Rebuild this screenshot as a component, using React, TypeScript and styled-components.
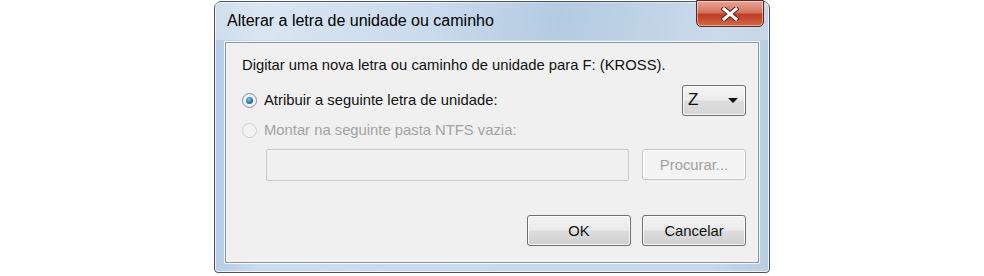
import styled, { createGlobalStyle } from 'styled-components';

const GlobalStyle = createGlobalStyle`
    body {
        margin: 0;
        background: #ffffff;
        font-family: "Liberation Sans", Arial, sans-serif;
    }
`

const Page = styled.div`
    width: 984px;
    height: 276px;
    padding-left: 214px;
    padding-top: 1px;
    box-sizing: border-box;
    overflow: hidden;
`

const Window = styled.div`
    position: relative;
    width: 556px;
    height: 272px;
    box-sizing: border-box;
    border: 1px solid #4a5260;
    border-radius: 7px 7px 4px 4px;
    background: linear-gradient(90deg, #b7cce2 0%, #cbdcee 8%, #c6d8ea 90%, #b9cde2 100%);
    box-shadow: inset 0 0 0 1px rgba(255,255,255,0.7);
    display: flex;
    flex-direction: column;
`

const TitleBar = styled.div`
    height: 38px;
    display: flex;
    align-items: center;
    padding-left: 12px;
    padding-bottom: 1px;
    box-sizing: border-box;
    font-size: 16px;
    color: #000;
    background: linear-gradient(100deg, rgba(255,255,255,0.35) 0%, rgba(255,255,255,0) 40%, rgba(160,188,216,0.5) 62%, rgba(255,255,255,0.2) 100%);
`

const CloseButton = styled.div`
    position: absolute;
    top: -2px;
    right: 5px;
    width: 68px;
    height: 27px;
    box-sizing: border-box;
    border: 1px solid #5a2a22;
    border-radius: 0 0 5px 5px;
    background: linear-gradient(180deg, #e8a595 0%, #d47560 45%, #c03c22 55%, #d56a48 100%);
    box-shadow: inset 0 0 0 1px rgba(255,255,255,0.45);
    display: flex;
    align-items: center;
    justify-content: center;
`

const Client = styled.div`
    margin: 2px 10px 9px 10px;
    flex: 1;
    border: 1px solid #8798ad;
    background: #f0f0f0;
    box-shadow: 0 0 0 1px rgba(255,255,255,0.8);
    padding: 12px 12px 0 16px;
    display: flex;
    flex-direction: column;
    font-size: 14.8px;
    color: #111;
`

const Instruction = styled.div`
    height: 20px;
    line-height: 20px;
`

const OptionRow = styled.div<{ $first?: boolean }>`
    display: flex;
    align-items: center;
    justify-content: space-between;
    height: 30px;
    margin-top: ${p => (p.$first ? '10px' : '0')};
`

const RadioLabel = styled.label<{ $disabled?: boolean }>`
    display: flex;
    align-items: center;
    gap: 7px;
    color: ${p => (p.$disabled ? '#a3a3a3' : '#111')};
`

const Radio = styled.span<{ $checked?: boolean; $disabled?: boolean }>`
    width: 15px;
    height: 15px;
    box-sizing: border-box;
    border-radius: 50%;
    border: 1px solid ${p => (p.$disabled ? '#cfcfcf' : '#7e8c9c')};
    background: ${p => (p.$disabled ? '#f2f2f2' : 'linear-gradient(180deg, #e8edf2, #fafbfc)')};
    display: flex;
    align-items: center;
    justify-content: center;
    &::after {
        content: '';
        display: ${p => (p.$checked ? 'block' : 'none')};
        width: 7px;
        height: 7px;
        border-radius: 50%;
        background: radial-gradient(circle at 40% 35%, #7fc0ef 0%, #2f76b5 55%, #1c4d80 100%);
    }
`

const Dropdown = styled.div`
    width: 64px;
    height: 31px;
    box-sizing: border-box;
    border: 1px solid #707070;
    border-radius: 3px;
    background: linear-gradient(180deg, #f4f4f4 0%, #ececec 48%, #dcdcdc 52%, #d6d6d6 100%);
    box-shadow: inset 0 0 0 1px rgba(255,255,255,0.8);
    display: flex;
    align-items: center;
    justify-content: space-between;
    padding: 0 7px 0 5px;
    font-size: 17px;
`

const Arrow = styled.span`
    width: 0;
    height: 0;
    border-left: 5px solid transparent;
    border-right: 5px solid transparent;
    border-top: 5px solid #111;
`

const PathRow = styled.div`
    display: flex;
    justify-content: space-between;
    padding-left: 24px;
    margin-top: 4px;
`

const PathInput = styled.div`
    width: 363px;
    height: 32px;
    box-sizing: border-box;
    border: 1px solid #c9c9c9;
    border-radius: 2px;
    background: #f0f0f0;
`

const Button = styled.div<{ $disabled?: boolean }>`
    width: 104px;
    height: 31px;
    box-sizing: border-box;
    border: 1px solid ${p => (p.$disabled ? '#c4c4c4' : '#707070')};
    border-radius: 3px;
    background: ${p => (p.$disabled ? '#f4f4f4' : 'linear-gradient(180deg, #f2f2f2 0%, #ebebeb 48%, #dddddd 52%, #cfcfcf 100%)')};
    box-shadow: inset 0 0 0 1px rgba(255,255,255,0.8);
    display: flex;
    align-items: center;
    justify-content: center;
    color: ${p => (p.$disabled ? '#a0a0a0' : '#111')};
    font-size: 14.8px;
`

const ButtonRow = styled.div`
    display: flex;
    justify-content: flex-end;
    gap: 11px;
    margin-top: 34px;
`

const App = () => {
    return (
        <>
            <GlobalStyle />
            <Page>
                <Window>
                    <TitleBar>Alterar a letra de unidade ou caminho</TitleBar>
                    <CloseButton>
                        <svg width="18" height="14" viewBox="0 0 18 14">
                            <path d="M3 2 L15 12 M15 2 L3 12" stroke="#5a2218" strokeWidth="5" strokeLinecap="square" />
                            <path d="M3 2 L15 12 M15 2 L3 12" stroke="#ffffff" strokeWidth="3" strokeLinecap="square" />
                        </svg>
                    </CloseButton>
                    <Client>
                        <Instruction>Digitar uma nova letra ou caminho de unidade para F: (KROSS).</Instruction>
                        <OptionRow $first>
                            <RadioLabel>
                                <Radio $checked />
                                Atribuir a seguinte letra de unidade:
                            </RadioLabel>
                            <Dropdown>
                                Z
                                <Arrow />
                            </Dropdown>
                        </OptionRow>
                        <OptionRow>
                            <RadioLabel $disabled>
                                <Radio $disabled />
                                Montar na seguinte pasta NTFS vazia:
                            </RadioLabel>
                        </OptionRow>
                        <PathRow>
                            <PathInput />
                            <Button $disabled>Procurar...</Button>
                        </PathRow>
                        <ButtonRow>
                            <Button>OK</Button>
                            <Button>Cancelar</Button>
                        </ButtonRow>
                    </Client>
                </Window>
            </Page>
        </>
    )
}

export default App
